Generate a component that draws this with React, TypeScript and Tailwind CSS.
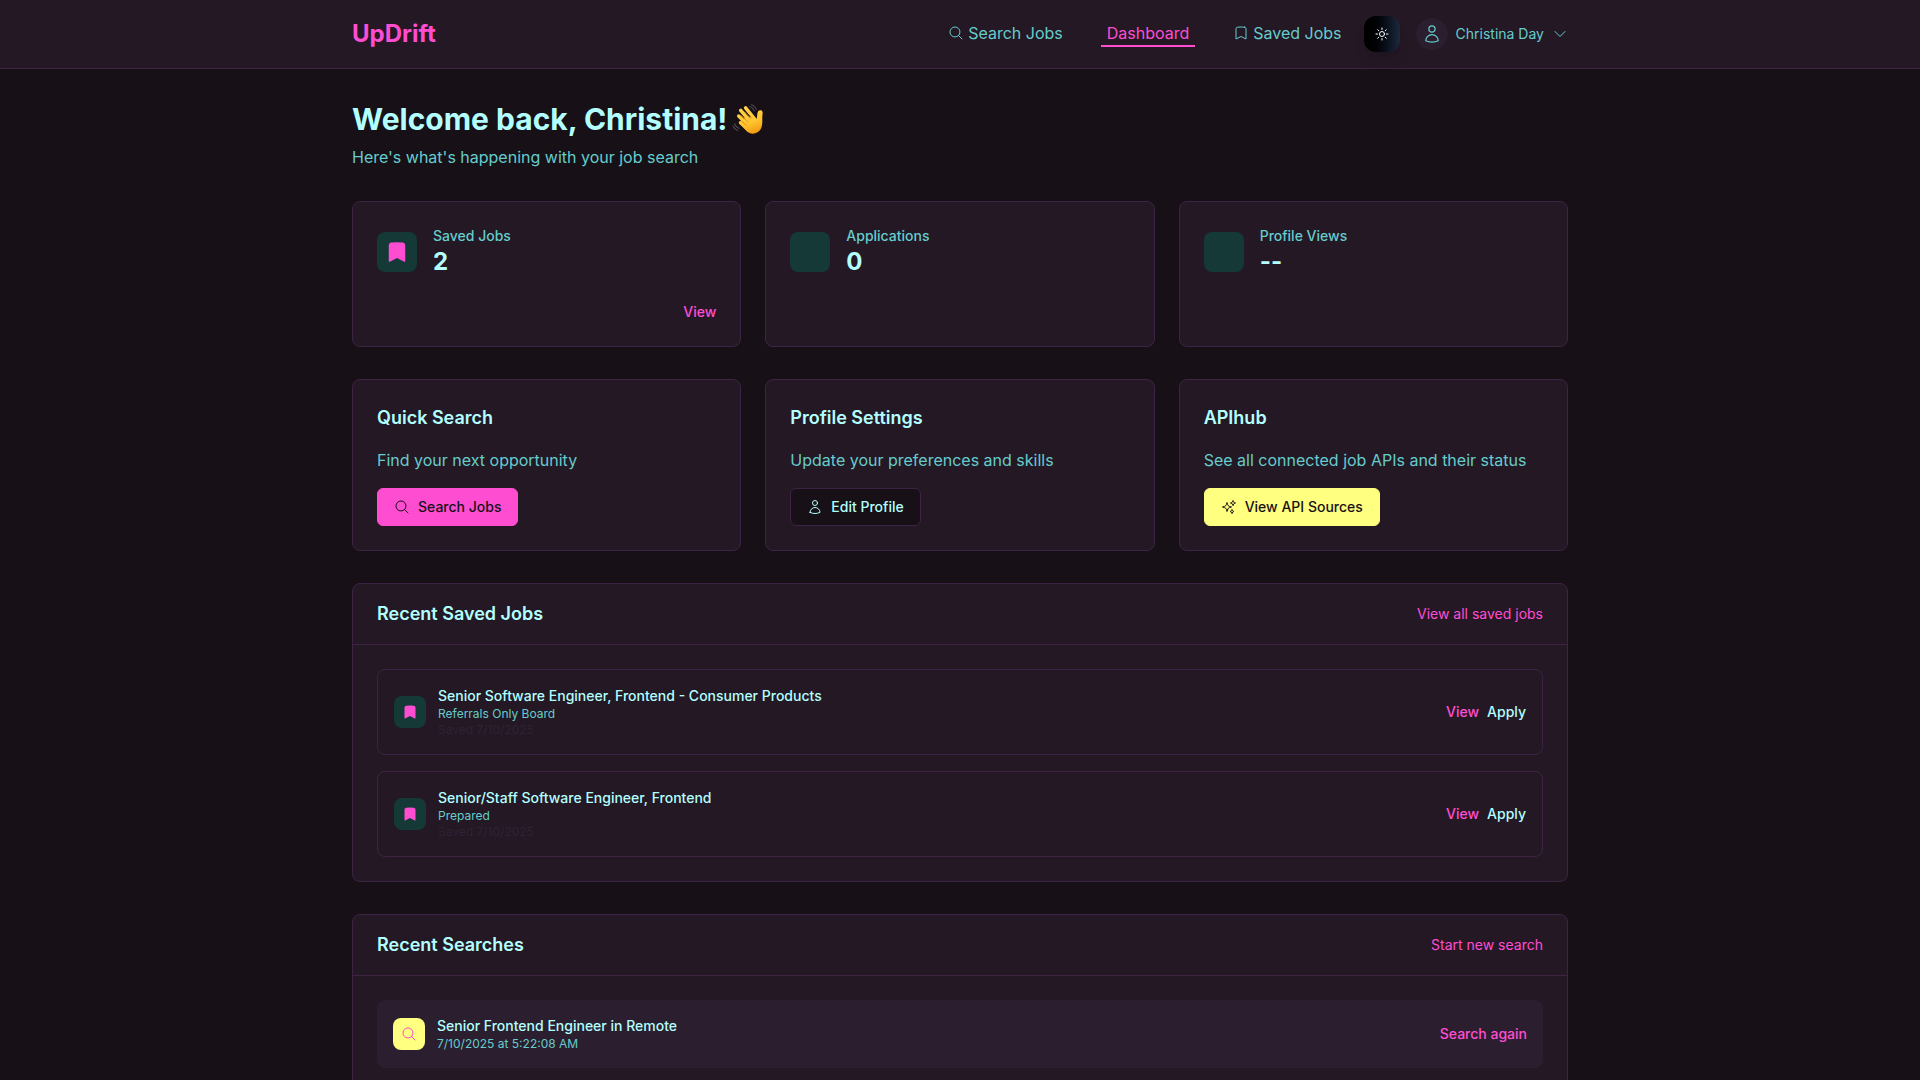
import type { ReactNode } from 'react';
import {
  HiBookmark,
  HiOutlineBookmark,
  HiOutlineChevronDown,
  HiOutlineMagnifyingGlass,
  HiOutlineSparkles,
  HiOutlineSun,
  HiOutlineUser,
} from 'react-icons/hi2';

const savedJobs = [
  {
    title: 'Senior Software Engineer, Frontend - Consumer Products',
    company: 'Referrals Only Board',
    saved: 'Saved 7/10/2025',
  },
  { title: 'Senior/Staff Software Engineer, Frontend', company: 'Prepared', saved: 'Saved 7/10/2025' },
];

const searches = [{ title: 'Senior Frontend Engineer in Remote', time: '7/10/2025 at 5:22:08 AM' }];

function WavingHand() {
  return (
    <svg viewBox="0 0 32 32" className="size-8 shrink-0" role="img" aria-label="Waving hand">
      <defs>
        <linearGradient id="skin" gradientUnits="userSpaceOnUse" x1="12" y1="4" x2="22" y2="31">
          <stop offset="0" stopColor="#ffd54a" />
          <stop offset="0.6" stopColor="#ffc32e" />
          <stop offset="1" stopColor="#f0980f" />
        </linearGradient>
      </defs>
      <g fill="none" stroke="#4b474b" strokeWidth="1.1" strokeLinecap="round">
        <path d="M17.6 3.2c2.2.8 3.8 2.4 4.6 4.6" />
        <path d="M19.6 1.4c2.3 1 4 2.8 4.8 5" />
        <path d="M2.6 20.6c.7 2.3 2.3 4 4.6 4.8" />
        <path d="M1 23c.9 2.2 2.6 3.9 4.8 4.7" />
      </g>
      <path
        fill="url(#skin)"
        d="M13 12 24.4 16.6C25.2 14.4 25 12.4 25.5 9.8 26 7.5 27.6 6.9 29 7.3 30.5 7.8 30.8 9.2 30.6 10.7 30.2 13.5 30.3 15.2 30.3 18 30.3 23 29.5 26.8 25.6 29.3 22 31.5 17.6 31 14.8 28.2L11 24Z"
      />
      <g fill="none" stroke="url(#skin)" strokeLinecap="round" strokeWidth="3.5">
        <path d="M13.6 4.8 23.5 17" />
        <path d="M8.7 7.3 20 20.5" />
        <path d="M6.7 13 17.5 23.5" />
        <path d="M8.5 19.6 16.5 27" />
      </g>
      <g fill="none" stroke="#d98212" strokeLinecap="round" strokeWidth="0.7">
        <path d="M13 9 18.6 15.7" />
        <path d="M9.8 12.7 16 19" />
        <path d="M10.5 18.8 14.5 22.5" />
      </g>
    </svg>
  );
}

function StatCard({ label, value, icon, action }: { label: string; value: string; icon?: ReactNode; action?: string }) {
  return (
    <section className="rounded-lg border border-[#3d2344] bg-[#231824] p-6">
      <div className="flex items-center gap-4">
        <div className="flex size-10 shrink-0 items-center justify-center rounded-lg bg-[#143937] text-[#ff4dd2]">{icon}</div>
        <div>
          <p className="text-sm font-medium text-[#66cccc]">{label}</p>
          <p className="text-2xl font-bold text-[#b3ffff]">{value}</p>
        </div>
      </div>
      {action && (
        <div className="mt-6 flex justify-end">
          <a href="#saved" className="text-sm font-medium text-[#ff4dd2]">{action}</a>
        </div>
      )}
    </section>
  );
}

function ActionCard({ title, text, children }: { title: string; text: string; children: ReactNode }) {
  return (
    <section className="flex flex-col items-start gap-4 rounded-lg border border-[#3d2344] bg-[#231824] p-6">
      <h2 className="text-lg font-semibold text-[#b3ffff]">{title}</h2>
      <p className="text-[#66cccc]">{text}</p>
      {children}
    </section>
  );
}

function Panel({ id, title, link, children }: { id: string; title: string; link: string; children: ReactNode }) {
  return (
    <section id={id} className="mt-8 rounded-lg border border-[#3d2344] bg-[#231824]">
      <div className="flex items-center justify-between border-b border-[#3d2344] px-6 py-4">
        <h2 className="text-lg font-semibold text-[#b3ffff]">{title}</h2>
        <a href="#all" className="text-sm text-[#ff4dd2]">{link}</a>
      </div>
      <div className="flex flex-col gap-4 p-6">{children}</div>
    </section>
  );
}

export default function App() {
  return (
    <div className="min-h-screen bg-[#171117] font-['Inter',sans-serif] text-base text-[#66cccc]">
      <header className="border-b border-[#3d2344] bg-[#231824]">
        <div className="mx-auto flex max-w-7xl items-center justify-between px-8 py-4">
          <a href="#home" className="text-2xl font-bold text-[#ff4dd2]">UpDrift</a>
          <div className="flex items-center gap-4">
            <nav className="flex items-center gap-8">
              <a href="#search" className="flex items-center gap-1 border-b-2 border-transparent px-1.5">
                <HiOutlineMagnifyingGlass className="size-4" />
                Search Jobs
              </a>
              <a href="#dashboard" aria-current="page" className="border-b-2 border-[#ff4dd2] px-1.5 text-[#ff4dd2]">
                Dashboard
              </a>
              <a href="#saved" className="flex items-center gap-1 border-b-2 border-transparent px-1.5">
                <HiOutlineBookmark className="size-4" />
                Saved Jobs
              </a>
            </nav>
            <button
              type="button"
              aria-label="Toggle theme"
              className="flex size-9 items-center justify-center rounded-xl bg-linear-to-r from-black to-slate-800 text-white shadow-lg"
            >
              <HiOutlineSun className="size-4" />
            </button>
            <button type="button" className="flex items-center gap-2 text-sm">
              <span className="flex size-8 items-center justify-center rounded-full bg-[#2b1f2f]">
                <HiOutlineUser className="size-5" />
              </span>
              Christina Day
              <HiOutlineChevronDown className="size-4" />
            </button>
          </div>
        </div>
      </header>

      <main className="mx-auto max-w-7xl px-8 py-8">
        <h1 className="flex items-center gap-1 text-3xl font-bold text-[#b3ffff]">
          Welcome back, Christina!
          <WavingHand />
        </h1>
        <p className="mt-2">Here's what's happening with your job search</p>

        <div className="mt-8 grid grid-cols-3 gap-6">
          <StatCard label="Saved Jobs" value="2" icon={<HiBookmark className="size-6" />} action="View" />
          <StatCard label="Applications" value="0" />
          <StatCard label="Profile Views" value="--" />
        </div>

        <div className="mt-8 grid grid-cols-3 gap-6">
          <ActionCard title="Quick Search" text="Find your next opportunity">
            <button
              type="button"
              className="flex items-center gap-2 rounded-md border border-[#ff4dd2] bg-[#ff4dd2] px-4 py-2 text-sm font-medium text-[#171117]"
            >
              <HiOutlineMagnifyingGlass className="size-4" />
              Search Jobs
            </button>
          </ActionCard>
          <ActionCard title="Profile Settings" text="Update your preferences and skills">
            <button
              type="button"
              className="flex items-center gap-2 rounded-md border border-[#3d2344] bg-[#171117] px-4 py-2 text-sm font-medium text-[#b3ffff]"
            >
              <HiOutlineUser className="size-4" />
              Edit Profile
            </button>
          </ActionCard>
          <ActionCard title="APIhub" text="See all connected job APIs and their status">
            <button
              type="button"
              className="flex items-center gap-2 rounded-md border border-[#ffff80] bg-[#ffff80] px-4 py-2 text-sm font-medium text-[#171117]"
            >
              <HiOutlineSparkles className="size-4" />
              View API Sources
            </button>
          </ActionCard>
        </div>

        <Panel id="saved" title="Recent Saved Jobs" link="View all saved jobs">
          {savedJobs.map((job) => (
            <article key={job.title} className="flex items-center gap-3 rounded-lg border border-[#3d2344] p-4">
              <div className="flex size-8 shrink-0 items-center justify-center rounded-lg bg-[#143937] text-[#ff4dd2]">
                <HiBookmark className="size-4" />
              </div>
              <div className="flex-1">
                <h3 className="text-sm font-medium text-[#b3ffff]">{job.title}</h3>
                <p className="text-xs">{job.company}</p>
                <p className="text-xs text-[#2f2234]">{job.saved}</p>
              </div>
              <div className="flex gap-2 text-sm font-medium">
                <a href="#view" className="text-[#ff4dd2]">View</a>
                <a href="#apply" className="text-[#b3ffff]">Apply</a>
              </div>
            </article>
          ))}
        </Panel>

        <Panel id="searches" title="Recent Searches" link="Start new search">
          {searches.map((search) => (
            <article key={search.title} className="flex items-center gap-3 rounded-lg bg-[#2b1f2f] p-4">
              <div className="flex size-8 shrink-0 items-center justify-center rounded-lg bg-[#ffff80] text-[#ff4dd2]">
                <HiOutlineMagnifyingGlass className="size-4" />
              </div>
              <div className="flex-1">
                <h3 className="text-sm font-medium text-[#b3ffff]">{search.title}</h3>
                <p className="text-xs">{search.time}</p>
              </div>
              <button type="button" className="text-sm font-medium text-[#ff4dd2]">Search again</button>
            </article>
          ))}
        </Panel>
      </main>
    </div>
  );
}
